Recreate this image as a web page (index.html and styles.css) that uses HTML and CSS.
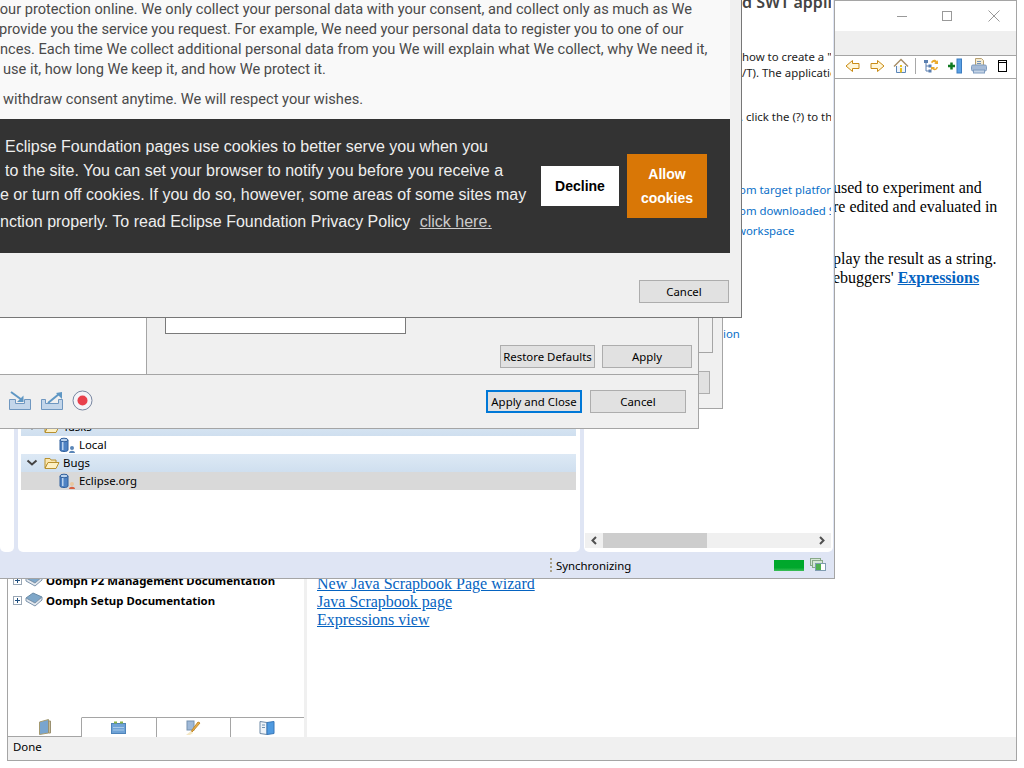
FILE: index.html
```html
<!DOCTYPE html>
<html lang="en">
<head>
<meta charset="utf-8">
<title>Eclipse</title>
<link rel="stylesheet" href="styles.css">
</head>
<body>
<div class="desktop">

  <section class="win help-win">
    <div class="help-title">
      <svg class="wc" width="14" height="14" viewBox="0 0 14 14"><path d="M2 7.500h10" stroke="#999" fill="none"/></svg>
      <svg class="wc" width="14" height="14" viewBox="0 0 14 14"><rect x="2.500" y="2.500" width="9" height="9" stroke="#999" fill="none"/></svg>
      <svg class="wc wc-close" width="14" height="14" viewBox="0 0 14 14"><path d="M1.500 1.500l11 11M12.500 1.500l-11 11" stroke="#999" fill="none"/></svg>
    </div>
    <div class="help-menu"></div>
    <div class="help-tools">
      <svg width="16" height="16" viewBox="0 0 16 16"><path d="M1 8L7.500 2.500v3H14v5H7.500v3z" fill="#fff6d8" stroke="#c98a14"/></svg>
      <svg width="16" height="16" viewBox="0 0 16 16"><path d="M15 8L8.500 2.500v3H2v5h6.500v3z" fill="#fff6d8" stroke="#c98a14"/></svg>
      <svg width="16" height="16" viewBox="0 0 16 16"><path d="M3.500 8v6.500h9V8" fill="#eef4fb" stroke="#5b86b8"/><path d="M1 8.500L8 1.500l7 7" fill="none" stroke="#a8906a" stroke-width="1.500"/><rect x="7" y="7" width="2" height="2" fill="#e8c020"/><rect x="7" y="10" width="2" height="4.500" fill="#e8c020"/></svg>
      <i class="tool-sep"></i>
      <svg width="16" height="16" viewBox="0 0 16 16"><path d="M3 4v9M3 8h3M3 13h3" stroke="#5a7fb0" fill="none"/><rect x="1" y="2" width="4" height="3" fill="#5a7fb0"/><rect x="5.500" y="6.500" width="3" height="3" fill="#5a7fb0"/><rect x="5.500" y="11.500" width="3" height="3" fill="#5a7fb0"/><path d="M8 4.500C9 1 13 1 14 3.500L15 2v4h-4l1.500-1C11.500 3.500 10 3.500 9.500 5z" fill="#eaa92c"/><path d="M15 9c-1 3.500-4 4-6 2l-1 1.500V9h4l-1 1c1 1 2 1 2.500-1z" fill="#eaa92c"/></svg>
      <svg width="16" height="16" viewBox="0 0 16 16"><rect x="10" y="1" width="4.500" height="14" fill="#5aa0e4" stroke="#3b7cc0"/><path d="M1 8h7M4.500 4.500v7" stroke="#0f7a20" stroke-width="2.500" fill="none"/></svg>
      <svg width="16" height="16" viewBox="0 0 16 16"><path d="M4.500 7V.5h6l2 2V7" fill="#f4ecd4" stroke="#b8a070"/><path d="M6 3.500h4M6 5.500h4" stroke="#7090b8"/><rect x=".5" y="7" width="15" height="6" rx="1.500" fill="#a6bbd6" stroke="#7f9cc0"/><rect x="2.500" y="12" width="11" height="3" fill="#c5d4e6" stroke="#7f9cc0"/></svg>
      <svg class="tool-last" width="12" height="14" viewBox="0 0 12 14"><rect x="1.500" y="1.500" width="8" height="11" fill="#fff" stroke="#000"/><path d="M1.500 3.500h8" stroke="#000"/></svg>
    </div>
    <div class="help-body">
      <div class="help-nav">
        <div class="help-tree">
          <div class="tree-row">
            <span class="plus"></span>
            <svg width="18" height="16" viewBox="0 0 18 16"><path d="M1 6l7-5 9 4-7 6z" fill="#7ea7c9" stroke="#688aa6"/><path d="M1 6v3l9 5 7-6V5l-7 6z" fill="#e3e8ee" stroke="#7d95ad"/></svg>
            <span>Oomph P2 Management Documentation</span>
          </div>
          <div class="tree-row">
            <span class="plus"></span>
            <svg width="18" height="16" viewBox="0 0 18 16"><path d="M1 6l7-5 9 4-7 6z" fill="#7ea7c9" stroke="#688aa6"/><path d="M1 6v3l9 5 7-6V5l-7 6z" fill="#e3e8ee" stroke="#7d95ad"/></svg>
            <span>Oomph Setup Documentation</span>
          </div>
        </div>
        <div class="help-tabs">
          <div class="help-tab is-active"><svg width="14" height="16" viewBox="0 0 14 16"><path d="M1.500 3l9-2.500V14l-9 1.500z" fill="#79a5cf" stroke="#a59a70"/><path d="M10.500 2h2v12h-2z" fill="#c9bf98" stroke="#9a9070"/></svg></div>
          <div class="help-tab"><svg width="16" height="14" viewBox="0 0 16 14"><rect x=".5" y="2.500" width="14" height="10" fill="#6ea2d6" stroke="#4e84ba"/><path d="M2 6.500h11M2 9h11" stroke="#a8cae8"/><path d="M3 .5h3v2H3zM9 .5h3v2H9z" fill="#88b048"/></svg></div>
          <div class="help-tab"><svg width="16" height="16" viewBox="0 0 16 16"><rect x="2" y="1" width="7" height="9" fill="#9fb9d8" stroke="#7792b0"/><path d="M15 3l-7 8-2 2 1-3 6-8z" fill="#e9b04a" stroke="#c48a2a"/><path d="M1 15l5-4 2 2-3 2z" fill="#f4e7c4"/></svg></div>
          <div class="help-tab"><svg width="16" height="16" viewBox="0 0 16 16"><path d="M8 2.500L1 1.500v12l7 1z" fill="#eef3f8" stroke="#6f8aa6"/><path d="M8 2.500l7-1v12l-7 1z" fill="#4f9ae0" stroke="#3877b8"/><path d="M3 5h3M3 7.500h3" stroke="#7090b0"/></svg></div>
        </div>
      </div>
      <div class="help-sash"></div>
      <div class="help-content">
        <p class="hc-line hc-a">used to experiment and</p>
        <p class="hc-line">re edited and evaluated in</p>
        <p class="hc-line hc-b">play the result as a string.</p>
        <p class="hc-line hc-c">ebuggers' <a href="#"><b>Expressions</b></a></p>
        <p class="hc-link hc-d"><a href="#">New Java Scrapbook Page wizard</a></p>
        <p class="hc-link"><a href="#">Java Scrapbook page</a></p>
        <p class="hc-link"><a href="#">Expressions view</a></p>
      </div>
    </div>
    <div class="help-status">Done</div>
  </section>

  <section class="win ide-win">
    <div class="ide-main">
      <div class="view view-a"></div>
      <div class="view view-b">
        <div class="row row-cat">
          <svg class="chev" width="12" height="8" viewBox="0 0 12 8"><path d="M1.500 1.500l4.500 4 4.500-4" fill="none" stroke="#444" stroke-width="2"/></svg>
          <svg class="folder" width="16" height="14" viewBox="0 0 16 14"><path d="M1 2.500h5l1 1.500h5v3H4l-3 5z" fill="#fbe7b0" stroke="#b8912f"/><path d="M4 6.500h11l-3 6H1z" fill="#fdf0c4" stroke="#b8912f"/></svg>
          <span>Tasks</span>
        </div>
        <div class="row row-item">
          <svg class="repo" width="17" height="17" viewBox="0 0 17 17"><path d="M1 3v10c0 2 8 2 8 0V3z" fill="#4f83c4" stroke="#2f5f9c"/><ellipse cx="5" cy="3" rx="4" ry="1.800" fill="#b9d2ee" stroke="#2f5f9c"/><rect x="3" y="5" width="1.500" height="8" fill="#b9d2ee"/><circle cx="13" cy="11" r="2" fill="#5a86b8"/><path d="M10 16c0-3 6-3 6 0z" fill="#5a86b8"/></svg>
          <span>Local</span>
        </div>
        <div class="row row-cat">
          <svg class="chev" width="12" height="8" viewBox="0 0 12 8"><path d="M1.500 1.500l4.500 4 4.500-4" fill="none" stroke="#444" stroke-width="2"/></svg>
          <svg class="folder" width="16" height="14" viewBox="0 0 16 14"><path d="M1 2.500h5l1 1.500h5v3H4l-3 5z" fill="#fbe7b0" stroke="#b8912f"/><path d="M4 6.500h11l-3 6H1z" fill="#fdf0c4" stroke="#b8912f"/></svg>
          <span>Bugs</span>
        </div>
        <div class="row row-item is-selected">
          <svg class="repo" width="17" height="17" viewBox="0 0 17 17"><path d="M1 3v10c0 2 8 2 8 0V3z" fill="#4f83c4" stroke="#2f5f9c"/><ellipse cx="5" cy="3" rx="4" ry="1.800" fill="#b9d2ee" stroke="#2f5f9c"/><rect x="3" y="5" width="1.500" height="8" fill="#b9d2ee"/><circle cx="13" cy="11" r="2" fill="#e8c8a0"/><path d="M10 16c0-3 6-3 6 0z" fill="#d86040"/></svg>
          <span>Eclipse.org</span>
        </div>
      </div>
      <div class="view view-c">
        <div class="doc">
          <h2 class="doc-h">d SWT appli</h2>
          <p class="doc-p doc-1">how to create a "</p>
          <p class="doc-p doc-2">/T). The application</p>
          <p class="doc-p doc-3">. click the (?) to the</p>
          <p class="doc-l doc-4">om target platform</p>
          <p class="doc-l doc-5">om downloaded SWT</p>
          <p class="doc-l doc-6">workspace</p>
          <p class="doc-l doc-7">ion</p>
        </div>
        <div class="hscroll">
          <svg width="18" height="15" viewBox="0 0 18 15"><path d="M11 4L7.500 7.500 11 11" fill="none" stroke="#505050" stroke-width="2"/></svg>
          <div class="hscroll-track"><div class="hscroll-thumb"></div></div>
          <svg width="18" height="15" viewBox="0 0 18 15"><path d="M7 4l3.500 3.500L7 11" fill="none" stroke="#505050" stroke-width="2"/></svg>
        </div>
      </div>
    </div>
    <div class="ide-status">
      <i class="grip"></i>
      <span class="sync">Synchronizing</span>
      <div class="progress"></div>
      <svg class="progress-icon" width="16" height="14" viewBox="0 0 16 14"><rect x=".5" y=".5" width="10" height="7" fill="#d6e8d6" stroke="#88a888"/><rect x="2.500" y="2.500" width="10" height="7" fill="#d6e8d6" stroke="#88a888"/><rect x="5.500" y="5.500" width="10" height="7" fill="#fff" stroke="#7f9cb0"/><rect x="6" y="6" width="5" height="6" fill="#4fb04f"/></svg>
    </div>
  </section>

  <section class="win stack-b"><div class="stack-btn"></div></section>
  <section class="win stack-c"></section>

  <section class="win pref-win">
    <div class="pref-main">
      <div class="pref-nav"></div>
      <div class="pref-panel">
        <div class="pref-input"></div>
        <div class="pref-actions">
          <button class="btn btn-restore">Restore Defaults</button>
          <button class="btn btn-apply">Apply</button>
        </div>
      </div>
    </div>
    <div class="pref-bar">
      <div class="pref-icons">
        <svg width="24" height="20" viewBox="0 0 24 20"><path d="M1.500 8.500v10h21v-10h-6v4h-9v-4z" fill="#c3d6ea" stroke="#6f97c0"/><path d="M3 1l11 8" stroke="#5f97c4" stroke-width="2"/><path d="M15.500 4.500V11H9z" fill="#5f97c4"/></svg>
        <svg width="24" height="20" viewBox="0 0 24 20"><path d="M1.500 8.500v10h21v-10h-4v4h-13v-4z" fill="#c3d6ea" stroke="#6f97c0"/><path d="M8 12L19 3" stroke="#5f97c4" stroke-width="2"/><path d="M22 1v7l-6-6z" fill="#5f97c4"/></svg>
        <svg width="21" height="21" viewBox="0 0 21 21"><circle cx="10.500" cy="10.500" r="9.500" fill="#f4f4f8" stroke="#7886a0"/><circle cx="10.500" cy="10.500" r="5" fill="#e8404c"/></svg>
      </div>
      <div class="pref-buttons">
        <button class="btn btn-default">Apply and Close</button>
        <button class="btn btn-cancel">Cancel</button>
      </div>
    </div>
  </section>

  <section class="win privacy-win">
    <div class="browser">
      <div class="policy">
        <p class="pl pl-1">your protection online. We only collect your personal data with your consent, and collect only as much as We</p>
        <p class="pl pl-2">provide you the service you request. For example, We need your personal data to register you to one of our</p>
        <p class="pl pl-3">nces. Each time We collect additional personal data from you We will explain what We collect, why We need it,</p>
        <p class="pl pl-4">use it, how long We keep it, and how We protect it.</p>
        <p class="pl pl-5">withdraw consent anytime. We will respect your wishes.</p>
      </div>
      <div class="banner">
        <div class="banner-text">
          <p class="bt bt-1">Eclipse Foundation pages use cookies to better serve you when you</p>
          <p class="bt bt-2">to the site. You can set your browser to notify you before you receive a</p>
          <p class="bt bt-3">e or turn off cookies. If you do so, however, some areas of some sites may</p>
          <p class="bt bt-4">nction properly. To read Eclipse Foundation Privacy Policy <a href="#">click here.</a></p>
        </div>
        <a class="cookie-decline" href="#">Decline</a>
        <a class="cookie-allow" href="#">Allow cookies</a>
      </div>
    </div>
    <div class="privacy-foot"><button class="btn btn-privacy">Cancel</button></div>
  </section>

</div>
</body>
</html>
```
FILE: styles.css
```css
* { box-sizing: border-box; }
html, body { margin: 0; padding: 0; }
body { background: #fff; font-family: "Noto Sans", sans-serif; font-size: 11.4px; color: #000; overflow: hidden; }
p, h2 { margin: 0; }
svg { display: block; flex: none; }
.desktop { position: relative; width: 1024px; height: 768px; overflow: hidden; }
.win { position: absolute; }

/* Help window */
.help-win { left: 7px; top: 0; width: 1010px; height: 761px; background: #f0f0f0; border: 1px solid #a5a5a5; display: flex; flex-direction: column; }
.help-title { height: 30px; background: #fff; display: flex; justify-content: flex-end; align-items: center; padding: 0 15px 0 0; gap: 31px; }
.wc-close { margin-left: 2px; }
.help-menu { height: 24px; background: #efefef; }
.help-tools { height: 24px; background: #fff; border-top: 1px solid #a5a5a5; border-bottom: 1px solid #a5a5a5; display: flex; justify-content: flex-end; align-items: center; gap: 8px; padding: 0 7px 2px 0; }
.tool-sep { width: 1px; height: 16px; background: #a8a8a8; margin: 0 -1px 0 -2px; }
.tool-last { margin-left: 2px; }
.help-body { flex: 1; display: flex; min-height: 0; background: #fff; }
.help-nav { width: 296px; display: flex; flex-direction: column; background: #fff; }
.help-tree { flex: 1; padding: 491px 0 0 5px; }
.tree-row { height: 20px; display: flex; align-items: center; gap: 3px; font-weight: 700; }
.plus { width: 9px; height: 9px; border: 1px solid #9aa7b5; background: linear-gradient(#1f4f80, #1f4f80) center / 5px 1px no-repeat, linear-gradient(#1f4f80, #1f4f80) center / 1px 5px no-repeat, #fff; }
.help-tabs { height: 20px; display: flex; }
.help-tab { flex: 1; display: flex; align-items: center; justify-content: center; background: #fff; border-top: 1px solid #a5a5a5; border-right: 1px solid #a5a5a5; }
.help-tab:last-child { border-right: 0; }
.help-tab.is-active { border-top-color: #fff; border-bottom: 1px solid #a5a5a5; }
.help-sash { width: 3px; background: #f0f0f0; }
.help-content { flex: 1; padding: 99px 0 0 10px; font-family: "Liberation Serif", serif; font-size: 16px; }
.help-content a { color: #0563c1; }
.hc-line { margin-left: 516px; height: 19px; line-height: 19px; white-space: nowrap; }
.hc-b { margin-top: 33px; }
.hc-link { height: 18px; line-height: 18px; white-space: nowrap; }
.hc-d { margin-top: 288px; }
.help-status { height: 23px; background: #f0f0f0; padding: 2px 0 0 5px; line-height: 16px; }

/* IDE window */
.ide-win { left: 0; top: 0; width: 835px; height: 579px; background: #dfe5f4; border-right: 1px solid #a5a5a5; border-bottom: 1px solid #a5a5a5; display: flex; flex-direction: column; }
.ide-main { flex: 1; display: flex; gap: 4px; padding-right: 1px; min-height: 0; }
.view { background: #fff; border-radius: 0 0 5px 5px; }
.view-a { width: 14px; }
.view-b { width: 562px; display: flex; flex-direction: column; justify-content: flex-end; padding: 0 4px 62px 3px; }
.row { height: 18px; display: flex; align-items: center; white-space: nowrap; padding-bottom: 1px; }
.row svg { margin-top: 1px; }
.row-cat { background: linear-gradient(#dde9f5, #cfdfef); }
.row-item { padding-left: 38px; }
.is-selected { background: #d9d9d9; }
.chev { margin-left: 5px; }
.folder { margin-left: 6px; margin-right: 3px; }
.repo { margin-right: 3px; }
.view-c { flex: 1; display: flex; flex-direction: column; padding: 0 2px 4px 1px; min-width: 0; }
.doc { flex: 1; overflow: hidden; padding-left: 157px; white-space: nowrap; color: #222; }
.doc-h { font-size: 16px; font-weight: 600; color: #444; line-height: 20px; margin-top: -8px; }
.doc-p { line-height: 16px; }
.doc-l { color: #0a6fc8; line-height: 20px; margin-left: -3px; }
.doc-1 { margin-top: 37px; }
.doc-3 { margin-top: 28px; margin-left: -2px; }
.doc-4 { margin-top: 55px; }
.doc-5 { margin-top: 1px; }
.doc-6 { margin-left: -5px; }
.doc-7 { margin-top: 83px; margin-left: -19px; }
.hscroll { height: 15px; background: #f0f0f0; display: flex; }
.hscroll-track { flex: 1; }
.hscroll-thumb { width: 104px; height: 15px; background: #cdcdcd; }
.ide-status { height: 26px; flex: none; display: flex; align-items: center; padding-left: 550px; padding-right: 8px; }
.grip { width: 2px; height: 14px; background: repeating-linear-gradient(#a89f88 0 2px, transparent 2px 4px); }
.sync { margin-left: 4px; flex: 1; }
.progress { width: 30px; height: 11px; background: linear-gradient(#00a82c 70%, #3cbe58); }
.progress-icon { margin-left: 6px; }

/* Stacked dialogs */
.stack-b { left: 0; top: 0; width: 723px; height: 409px; background: #f0f0f0; border: 1px solid #a5a5a5; display: flex; align-items: flex-end; justify-content: flex-end; padding: 0 12px 14px 0; }
.stack-btn { width: 40px; height: 23px; background: #e1e1e1; border: 1px solid #adadad; }
.stack-c { left: 0; top: 0; width: 713px; height: 353px; background: #f0f0f0; border: 1px solid #a5a5a5; }

/* Preferences */
.pref-win { left: 0; top: 0; width: 699px; height: 429px; background: #f0f0f0; border-right: 1px solid #a5a5a5; border-bottom: 1px solid #a5a5a5; display: flex; flex-direction: column; }
.pref-main { height: 375px; display: flex; border-bottom: 1px solid #a5a5a5; }
.pref-nav { width: 147px; background: #fff; border-right: 1px solid #a5a5a5; flex: none; }
.pref-panel { flex: 1; display: flex; flex-direction: column; justify-content: flex-end; padding: 0 6px 6px 18px; }
.pref-input { width: 241px; height: 60px; background: #fff; border: 1px solid #7a7a7a; margin-bottom: 11px; }
.pref-actions { display: flex; justify-content: flex-end; gap: 7px; }
.btn { height: 23px; font: 11.4px/1 "Noto Sans", sans-serif; background: #e1e1e1; border: 1px solid #adadad; color: #000; padding: 0; white-space: nowrap; }
.btn-restore { width: 95px; }
.btn-apply { width: 90px; }
.pref-bar { flex: 1; display: flex; align-items: center; justify-content: space-between; padding: 0 12px 0 8px; }
.pref-icons { display: flex; align-items: center; gap: 8px; padding-bottom: 2px; }
.pref-buttons { display: flex; gap: 8px; }
.btn-default { width: 96px; border: 2px solid #0078d7; }
.btn-cancel { width: 96px; }

/* Privacy dialog */
.privacy-win { left: 0; top: 0; width: 742px; height: 318px; background: #f0f0f0; border-right: 1px solid #777; border-bottom: 1px solid #777; display: flex; flex-direction: column; }
.browser { width: 730px; height: 253px; background: #f9f9f9; display: flex; flex-direction: column; overflow: hidden; flex: none; }
.policy { font-family: Roboto, sans-serif; font-size: 14.6px; line-height: 20px; color: #4a4a4a; white-space: nowrap; margin-top: -1px; flex: none; height: 120px; }
.pl-1 { margin-left: -7px; }
.pl-2 { margin-left: -1px; }
.pl-4 { margin-left: 3px; }
.pl-5 { margin-left: 3px; margin-top: 10px; }
.banner { flex: 1; background: #333; display: flex; align-items: center; padding-right: 23px; }
.banner-text { width: 541px; font-family: "Liberation Sans", sans-serif; font-size: 16px; color: #eee; white-space: nowrap; padding-bottom: 4px; }
.bt { line-height: 24px; }
.bt-1, .bt-2 { margin-left: 5px; }
.bt-4 { margin-top: 3px; }
.bt-4 a { color: #ccc; margin-left: 5px; }
.cookie-decline { width: 78px; height: 40px; background: #fff; color: #000; font: 700 14px/40px "Liberation Sans", sans-serif; text-align: center; text-decoration: none; }
.cookie-allow { width: 80px; height: 64px; margin-left: 8px; background: #d97706; color: #fff; font: 700 14px/24px "Liberation Sans", sans-serif; text-align: center; text-decoration: none; padding: 8px 10px; }
.privacy-foot { flex: 1; display: flex; justify-content: flex-end; padding: 27px 12px 0 0; }
.btn-privacy { width: 90px; }
```
